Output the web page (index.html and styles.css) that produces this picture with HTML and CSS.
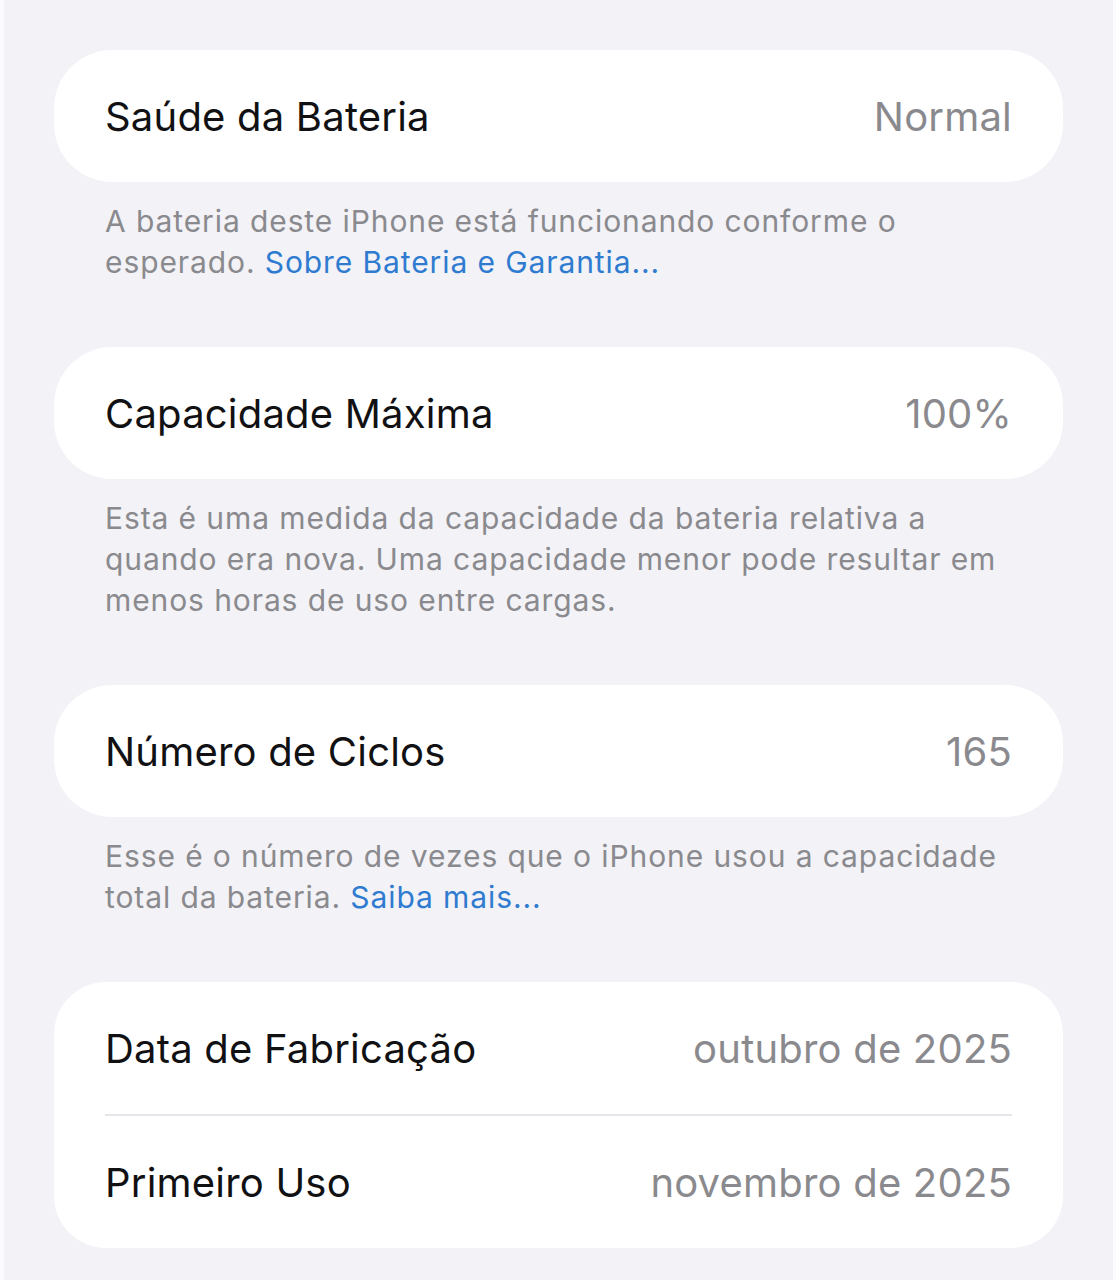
FILE: index.html
```html
<!DOCTYPE html>
<html lang="pt-BR">
<head>
<meta charset="utf-8">
<title>Saúde da Bateria</title>
<link rel="stylesheet" href="styles.css">
</head>
<body>
<main class="page">
  <section class="group">
    <div class="card">
      <div class="row"><span class="label">Saúde da Bateria</span><span class="value">Normal</span></div>
    </div>
    <p class="footer">A bateria deste iPhone está funcionando conforme o esperado. <a class="link" href="#">Sobre Bateria e Garantia...</a></p>
  </section>
  <section class="group">
    <div class="card">
      <div class="row"><span class="label">Capacidade Máxima</span><span class="value">100%</span></div>
    </div>
    <p class="footer">Esta é uma medida da capacidade da bateria relativa a quando era nova. Uma capacidade menor pode resultar em menos horas de uso entre cargas.</p>
  </section>
  <section class="group">
    <div class="card">
      <div class="row"><span class="label">Número de Ciclos</span><span class="value">165</span></div>
    </div>
    <p class="footer">Esse é o número de vezes que o iPhone usou a capacidade total da bateria. <a class="link" href="#">Saiba mais...</a></p>
  </section>
  <section class="group">
    <div class="card card-list">
      <div class="row"><span class="label">Data de Fabricação</span><span class="value">outubro de 2025</span></div>
      <div class="separator"></div>
      <div class="row"><span class="label">Primeiro Uso</span><span class="value">novembro de 2025</span></div>
    </div>
  </section>
</main>
</body>
</html>
```
FILE: styles.css
```css
html, body {
  margin: 0;
  padding: 0;
}
body {
  background: #f2f2f7;
  font-family: Inter, "Noto Sans", "Liberation Sans", sans-serif;
  border-left: 4px solid #fbfbfd;
  border-right: 3px solid #fbfbfd;
  min-height: 1280px;
  box-sizing: border-box;
}
.page {
  padding: 50px 50px 0 50px;
  display: flex;
  flex-direction: column;
}
.card {
  background: #ffffff;
  border-radius: 58px;
  padding: 0 51px;
}
.card-list {
  border-radius: 52px;
}
.row {
  height: 132px;
  display: flex;
  align-items: center;
  justify-content: space-between;
  font-size: 40px;
  letter-spacing: 0.2px;
}
.label {
  color: #111113;
}
.value {
  color: #8a8a8e;
}
.separator {
  height: 2px;
  background: #e6e6ea;
}
.footer {
  margin: 19px 0 64px;
  padding: 0 51px;
  font-size: 30px;
  line-height: 41px;
  color: #8a8a8e;
  letter-spacing: 0.9px;
}
.link {
  color: #2f7bd0;
  text-decoration: none;
}
```
